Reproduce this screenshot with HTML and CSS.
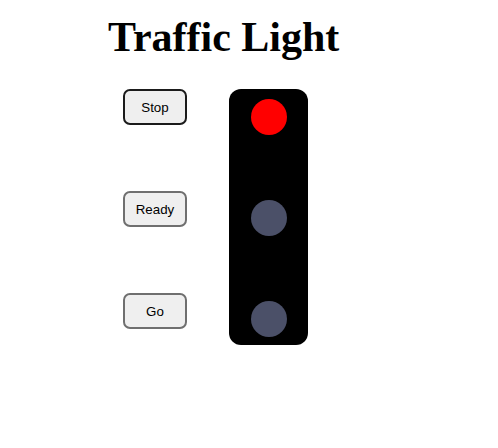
FILE: index.html
```html
<!DOCTYPE html>
<html>
<head>
<meta charset="utf-8">
<link rel="stylesheet" href="styles.css">
</head>
<body>
<h1 class="title">Traffic Light</h1>
<div class="main">
  <div class="controls">
    <button class="btn btn-active">Stop</button>
    <button class="btn">Ready</button>
    <button class="btn">Go</button>
  </div>
  <div class="light">
    <div class="lamp lamp-red"></div>
    <div class="lamp"></div>
    <div class="lamp"></div>
  </div>
</div>
</body>
</html>
```

FILE: styles.css
```css
html, body {
  margin: 0;
  padding: 0;
  background: #fff;
}
.title {
  font-family: "Liberation Serif", "Times New Roman", serif;
  font-size: 42px;
  font-weight: bold;
  line-height: 46px;
  margin: 14px 0 0 108px;
  color: #000;
}
.main {
  display: flex;
  align-items: flex-start;
  margin: 29px 0 0 123px;
  gap: 42px;
}
.controls {
  display: flex;
  flex-direction: column;
  gap: 66px;
}
.btn {
  box-sizing: border-box;
  width: 64px;
  height: 36px;
  padding: 0;
  font-family: "Liberation Sans", Arial, sans-serif;
  font-size: 13.33px;
  color: #000;
  background: #efefef;
  border: 2px solid #6f6f6f;
  border-radius: 7px;
}
.btn-active {
  border-color: #1b1b1b;
}
.light {
  box-sizing: border-box;
  width: 79px;
  height: 256px;
  background: #000;
  border-radius: 12px;
  padding-top: 10px;
  display: flex;
  flex-direction: column;
  align-items: center;
  gap: 65px;
}
.lamp {
  width: 36px;
  height: 36px;
  border-radius: 50%;
  background: #4b5068;
}
.lamp-red {
  background: #ff0000;
}
```
